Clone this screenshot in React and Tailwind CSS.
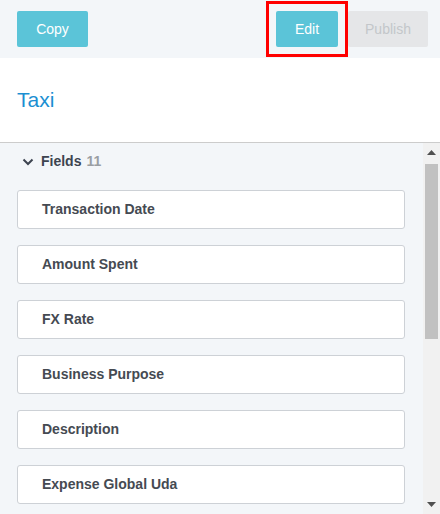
import React from 'react';

const fields = [
  'Transaction Date',
  'Amount Spent',
  'FX Rate',
  'Business Purpose',
  'Description',
  'Expense Global Uda',
];

// --- Helper Icons ---
const ChevronDown = () => (
  <svg width="12" height="8" viewBox="0 0 12 8" fill="none" stroke="#3d4450" strokeWidth="2">
    <path d="M1.5 1.5l4.5 4.5 4.5-4.5" />
  </svg>
);

const Arrow = ({ up }) => (
  <svg width="9" height="5" viewBox="0 0 9 5" fill="#505050">
    {up ? <path d="M0 5L4.5 0 9 5z" /> : <path d="M0 0h9L4.5 5z" />}
  </svg>
);

const FieldCard = ({ label }) => (
  <div className="h-[39px] flex items-center bg-white border border-[#cdd1d6] rounded-[3px] pl-[24px] text-[14px] font-bold text-[#454a52]">
    {label}
  </div>
);

export default function App() {
  return (
    <div className="w-[440px] h-[514px] flex flex-col overflow-hidden bg-white" style={{ fontFamily: '"Liberation Sans", Arial, sans-serif' }}>
      {/* Toolbar */}
      <div className="h-[58px] shrink-0 flex items-center bg-[#f3f6f9] pl-[17px] pr-[12px]">
        <button className="w-[71px] h-[36px] rounded-[2px] bg-[#5bc4d8] text-white text-[14px]">Copy</button>
        <div className="flex-1" />
        <div className="relative">
          <button className="w-[62px] h-[36px] rounded-[2px] bg-[#5bc4d8] text-white text-[14px]">Edit</button>
          <div className="absolute -left-[10px] -right-[10px] -top-[10px] -bottom-[10px] border-[3px] border-[#ff0000] pointer-events-none" />
        </div>
        <button className="ml-[10px] w-[80px] h-[36px] rounded-[2px] bg-[#e5e6e8] text-[#c3c6ca] text-[14px]">Publish</button>
      </div>

      {/* Title */}
      <div className="h-[85px] shrink-0 flex items-center px-[17px] border-b border-[#cccccc] bg-white">
        <h1 className="text-[21px] text-[#1b8fd2]">Taxi</h1>
      </div>

      {/* Fields list */}
      <div className="flex-1 flex min-h-0 bg-[#f3f6f9]">
        <div className="flex-1 pl-[17px] pr-[18px]">
          <div className="h-[37px] flex items-center pl-[5px] gap-[7px]">
            <ChevronDown />
            <span className="text-[14px] font-bold text-[#3d4450]">Fields</span>
            <span className="text-[14px] font-bold text-[#9a9ea3] -ml-[2px]">11</span>
          </div>
          <div className="mt-[10px] flex flex-col gap-[16px]">
            {fields.map((f) => (
              <FieldCard key={f} label={f} />
            ))}
          </div>
        </div>
        {/* Scrollbar */}
        <div className="w-[17px] shrink-0 flex flex-col bg-[#f1f1f1]">
          <div className="h-[18px] flex items-center justify-center"><Arrow up /></div>
          <div className="mt-[3px] mx-[2px] h-[175px] bg-[#c1c1c1]" />
          <div className="flex-1" />
          <div className="h-[18px] flex items-center justify-center pb-[2px]"><Arrow /></div>
        </div>
      </div>
    </div>
  );
}
